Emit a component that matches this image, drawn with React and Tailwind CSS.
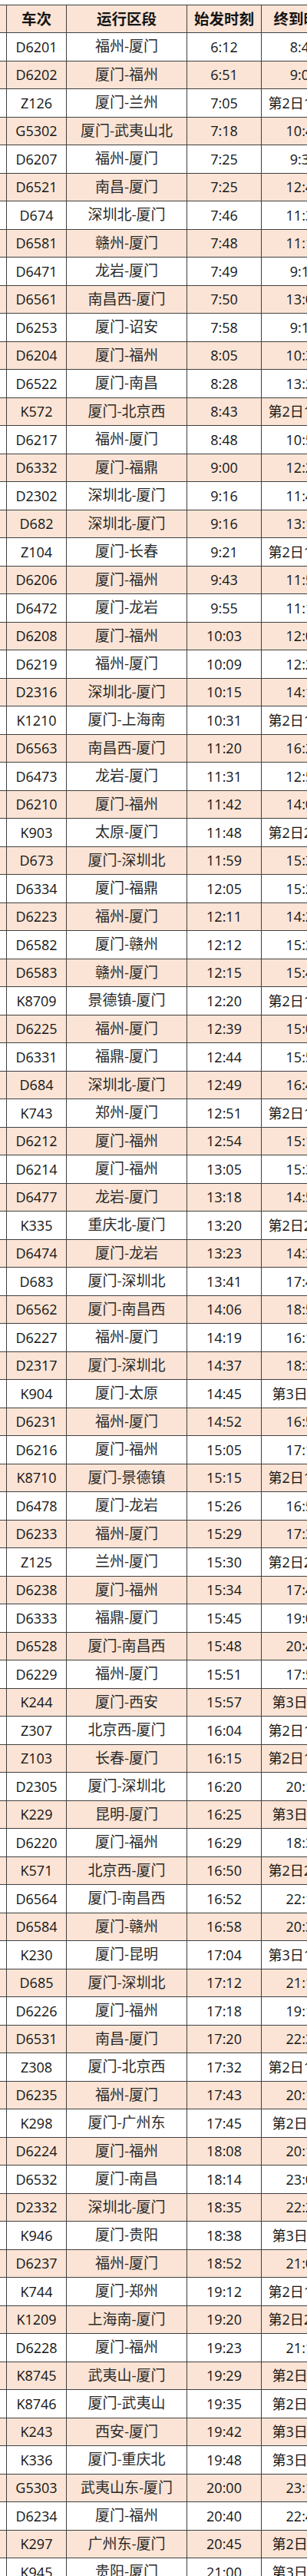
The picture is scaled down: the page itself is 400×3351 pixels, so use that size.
import React from "react";

const rows = [
  ["D6201", "福州-厦门", "6:12", "8:45"],
  ["D6202", "厦门-福州", "6:51", "9:08"],
  ["Z126", "厦门-兰州", "7:05", "第2日16:28"],
  ["G5302", "厦门-武夷山北", "7:18", "10:42"],
  ["D6207", "福州-厦门", "7:25", "9:36"],
  ["D6521", "南昌-厦门", "7:25", "12:46"],
  ["D674", "深圳北-厦门", "7:46", "11:35"],
  ["D6581", "赣州-厦门", "7:48", "11:18"],
  ["D6471", "龙岩-厦门", "7:49", "9:10"],
  ["D6561", "南昌西-厦门", "7:50", "13:05"],
  ["D6253", "厦门-诏安", "7:58", "9:12"],
  ["D6204", "厦门-福州", "8:05", "10:32"],
  ["D6522", "厦门-南昌", "8:28", "13:24"],
  ["K572", "厦门-北京西", "8:43", "第2日15:47"],
  ["D6217", "福州-厦门", "8:48", "10:56"],
  ["D6332", "厦门-福鼎", "9:00", "12:23"],
  ["D2302", "深圳北-厦门", "9:16", "11:48"],
  ["D682", "深圳北-厦门", "9:16", "13:15"],
  ["Z104", "厦门-长春", "9:21", "第2日19:58"],
  ["D6206", "厦门-福州", "9:43", "11:50"],
  ["D6472", "厦门-龙岩", "9:55", "11:17"],
  ["D6208", "厦门-福州", "10:03", "12:06"],
  ["D6219", "福州-厦门", "10:09", "12:27"],
  ["D2316", "深圳北-厦门", "10:15", "14:13"],
  ["K1210", "厦门-上海南", "10:31", "第2日10:45"],
  ["D6563", "南昌西-厦门", "11:20", "16:25"],
  ["D6473", "龙岩-厦门", "11:31", "12:53"],
  ["D6210", "厦门-福州", "11:42", "14:07"],
  ["K903", "太原-厦门", "11:48", "第2日20:55"],
  ["D673", "厦门-深圳北", "11:59", "15:38"],
  ["D6334", "厦门-福鼎", "12:05", "15:26"],
  ["D6223", "福州-厦门", "12:11", "14:21"],
  ["D6582", "厦门-赣州", "12:12", "15:36"],
  ["D6583", "赣州-厦门", "12:15", "15:41"],
  ["K8709", "景德镇-厦门", "12:20", "第2日10:30"],
  ["D6225", "福州-厦门", "12:39", "15:03"],
  ["D6331", "福鼎-厦门", "12:44", "15:52"],
  ["D684", "深圳北-厦门", "12:49", "16:44"],
  ["K743", "郑州-厦门", "12:51", "第2日11:39"],
  ["D6212", "厦门-福州", "12:54", "15:16"],
  ["D6214", "厦门-福州", "13:05", "15:31"],
  ["D6477", "龙岩-厦门", "13:18", "14:51"],
  ["K335", "重庆北-厦门", "13:20", "第2日21:05"],
  ["D6474", "厦门-龙岩", "13:23", "14:39"],
  ["D683", "厦门-深圳北", "13:41", "17:45"],
  ["D6562", "厦门-南昌西", "14:06", "18:58"],
  ["D6227", "福州-厦门", "14:19", "16:19"],
  ["D2317", "厦门-深圳北", "14:37", "18:37"],
  ["K904", "厦门-太原", "14:45", "第3日6:12"],
  ["D6231", "福州-厦门", "14:52", "16:57"],
  ["D6216", "厦门-福州", "15:05", "17:12"],
  ["K8710", "厦门-景德镇", "15:15", "第2日10:12"],
  ["D6478", "厦门-龙岩", "15:26", "16:50"],
  ["D6233", "福州-厦门", "15:29", "17:34"],
  ["Z125", "兰州-厦门", "15:30", "第2日22:38"],
  ["D6238", "厦门-福州", "15:34", "17:46"],
  ["D6333", "福鼎-厦门", "15:45", "19:02"],
  ["D6528", "厦门-南昌西", "15:48", "20:41"],
  ["D6229", "福州-厦门", "15:51", "17:55"],
  ["K244", "厦门-西安", "15:57", "第3日5:20"],
  ["Z307", "北京西-厦门", "16:04", "第2日15:14"],
  ["Z103", "长春-厦门", "16:15", "第2日17:32"],
  ["D2305", "厦门-深圳北", "16:20", "20:15"],
  ["K229", "昆明-厦门", "16:25", "第3日9:49"],
  ["D6220", "厦门-福州", "16:29", "18:33"],
  ["K571", "北京西-厦门", "16:50", "第2日20:56"],
  ["D6564", "厦门-南昌西", "16:52", "22:10"],
  ["D6584", "厦门-赣州", "16:58", "20:38"],
  ["K230", "厦门-昆明", "17:04", "第3日12:38"],
  ["D685", "厦门-深圳北", "17:12", "21:13"],
  ["D6226", "厦门-福州", "17:18", "19:15"],
  ["D6531", "南昌-厦门", "17:20", "22:35"],
  ["Z308", "厦门-北京西", "17:32", "第2日12:16"],
  ["D6235", "福州-厦门", "17:43", "20:17"],
  ["K298", "厦门-广州东", "17:45", "第2日8:04"],
  ["D6224", "厦门-福州", "18:08", "20:18"],
  ["D6532", "厦门-南昌", "18:14", "23:05"],
  ["D2332", "深圳北-厦门", "18:35", "22:21"],
  ["K946", "厦门-贵阳", "18:38", "第3日8:55"],
  ["D6237", "福州-厦门", "18:52", "21:02"],
  ["K744", "厦门-郑州", "19:12", "第2日12:48"],
  ["K1209", "上海南-厦门", "19:20", "第2日21:40"],
  ["D6228", "厦门-福州", "19:23", "21:15"],
  ["K8745", "武夷山-厦门", "19:29", "第2日7:47"],
  ["K8746", "厦门-武夷山", "19:35", "第2日6:40"],
  ["K243", "西安-厦门", "19:42", "第3日5:58"],
  ["K336", "厦门-重庆北", "19:48", "第3日7:34"],
  ["G5303", "武夷山东-厦门", "20:00", "23:12"],
  ["D6234", "厦门-福州", "20:40", "22:46"],
  ["K297", "广州东-厦门", "20:45", "第2日8:35"],
  ["K945", "贵阳-厦门", "21:00", "第3日7:10"],
];

function Row({ r, i }) {
  const bg = i % 2 === 1 ? "bg-[#fbe4d5]" : "bg-white";
  return (
    <div className={`flex h-[36.5px] shrink-0 border-b border-[#404040] ${bg}`}>
      <div className="w-[9px] shrink-0 border-r border-[#404040]" />
      <div className="flex w-[78px] shrink-0 items-center justify-center border-r border-[#404040] text-[18px]">
        {r[0]}
      </div>
      <div className="flex w-[157px] shrink-0 items-center justify-center border-r border-[#404040] text-[19px] text-[#2a2a2a]">
        {r[1]}
      </div>
      <div className="flex w-[97px] shrink-0 items-center justify-center border-r border-[#404040] text-[18px]">
        {r[2]}
      </div>
      <div className="flex w-[110px] shrink-0 items-center justify-center whitespace-nowrap border-r border-[#404040] text-[18px]">
        {r[3]}
      </div>
    </div>
  );
}

export default function App() {
  return (
    <div className="h-[3351px] w-[400px] overflow-hidden bg-white pt-[6px] font-['Open_Sans','Noto_Sans_CJK_SC',sans-serif] leading-none text-[#151515]">
      <div className="flex w-[460px] flex-col">
        <div className="flex h-[37px] shrink-0 border-y border-[#404040] bg-[#fbe4d5] text-[19.5px] font-bold">
          <div className="w-[9px] shrink-0 border-r border-[#404040]" />
          <div className="flex w-[78px] shrink-0 items-center justify-center border-r border-[#404040]">
            车次
          </div>
          <div className="flex w-[157px] shrink-0 items-center justify-center border-r border-[#404040]">
            运行区段
          </div>
          <div className="flex w-[97px] shrink-0 items-center justify-center border-r border-[#404040]">
            始发时刻
          </div>
          <div className="flex w-[110px] shrink-0 items-center justify-center whitespace-nowrap border-r border-[#404040]">
            终到时刻
          </div>
        </div>
        {rows.map((r, i) => (
          <Row key={r[0] + i} r={r} i={i} />
        ))}
      </div>
    </div>
  );
}
